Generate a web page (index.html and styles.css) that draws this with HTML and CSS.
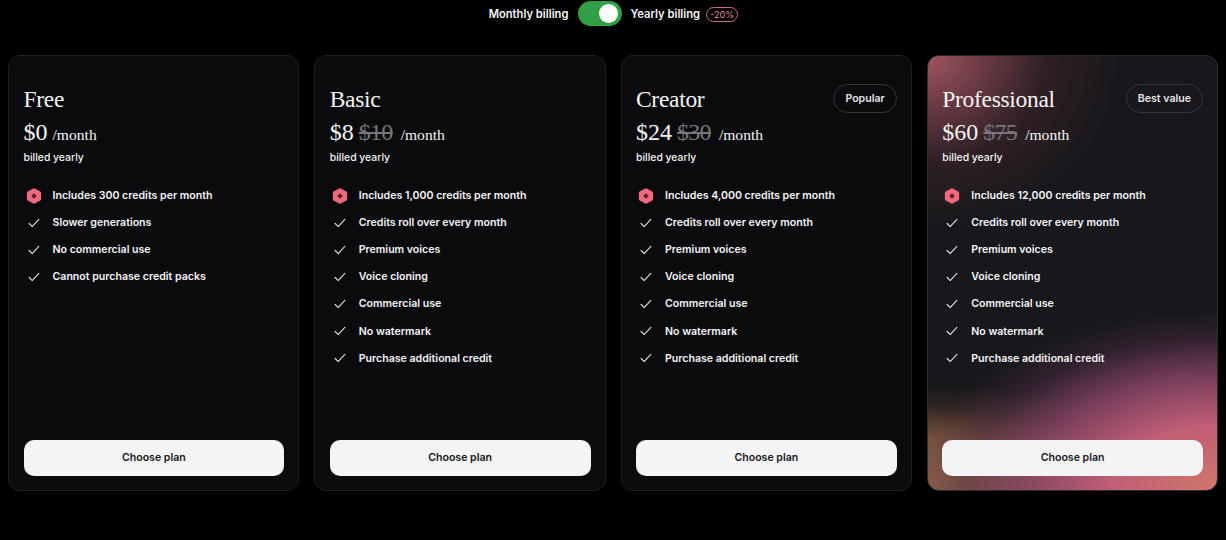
FILE: index.html
```html
<!DOCTYPE html>
<html lang="en">
<head>
<meta charset="utf-8">
<title>Pricing</title>
<link rel="stylesheet" href="styles.css">
</head>
<body>
<svg class="defs" width="0" height="0" aria-hidden="true">
  <symbol id="credit" viewBox="0 0 16 16">
    <path fill="#ee6a7c" stroke="#ee6a7c" stroke-width="1.4" stroke-linejoin="round" d="M8 .9 14.4 4.3V11.7L8 15.1 1.6 11.7V4.3Z"/>
    <path fill="#5c1f2c" d="M8 5.2 10.8 8 8 10.8 5.2 8Z"/>
  </symbol>
  <symbol id="check" viewBox="0 0 12 10">
    <path fill="none" stroke="#fff" stroke-width="1.05" d="M.8 5.2 4.2 8.6 11.2 1"/>
  </symbol>
</svg>
<header class="billing">
  <span>Monthly billing</span>
  <span class="toggle"><span class="knob"></span></span>
  <span>Yearly billing</span>
  <span class="discount">-20%</span>
</header>
<main class="plans">
  <section class="card">
    <div class="head"><h2>Free</h2></div>
    <div class="price"><b>$0</b><span class="per">/month</span></div>
    <p class="billed">billed yearly</p>
    <ul class="features">
      <li><svg class="credit"><use href="#credit"/></svg>Includes 300 credits per month</li>
      <li><svg class="check"><use href="#check"/></svg>Slower generations</li>
      <li><svg class="check"><use href="#check"/></svg>No commercial use</li>
      <li><svg class="check"><use href="#check"/></svg>Cannot purchase credit packs</li>
    </ul>
    <button class="choose">Choose plan</button>
  </section>
  <section class="card">
    <div class="head"><h2>Basic</h2></div>
    <div class="price"><b>$8</b><s>$10</s><span class="per">/month</span></div>
    <p class="billed">billed yearly</p>
    <ul class="features">
      <li><svg class="credit"><use href="#credit"/></svg>Includes 1,000 credits per month</li>
      <li><svg class="check"><use href="#check"/></svg>Credits roll over every month</li>
      <li><svg class="check"><use href="#check"/></svg>Premium voices</li>
      <li><svg class="check"><use href="#check"/></svg>Voice cloning</li>
      <li><svg class="check"><use href="#check"/></svg>Commercial use</li>
      <li><svg class="check"><use href="#check"/></svg>No watermark</li>
      <li><svg class="check"><use href="#check"/></svg>Purchase additional credit</li>
    </ul>
    <button class="choose">Choose plan</button>
  </section>
  <section class="card">
    <div class="head"><h2>Creator</h2><span class="tag">Popular</span></div>
    <div class="price"><b>$24</b><s>$30</s><span class="per">/month</span></div>
    <p class="billed">billed yearly</p>
    <ul class="features">
      <li><svg class="credit"><use href="#credit"/></svg>Includes 4,000 credits per month</li>
      <li><svg class="check"><use href="#check"/></svg>Credits roll over every month</li>
      <li><svg class="check"><use href="#check"/></svg>Premium voices</li>
      <li><svg class="check"><use href="#check"/></svg>Voice cloning</li>
      <li><svg class="check"><use href="#check"/></svg>Commercial use</li>
      <li><svg class="check"><use href="#check"/></svg>No watermark</li>
      <li><svg class="check"><use href="#check"/></svg>Purchase additional credit</li>
    </ul>
    <button class="choose">Choose plan</button>
  </section>
  <section class="card pro">
    <div class="head"><h2>Professional</h2><span class="tag">Best value</span></div>
    <div class="price"><b>$60</b><s>$75</s><span class="per">/month</span></div>
    <p class="billed">billed yearly</p>
    <ul class="features">
      <li><svg class="credit"><use href="#credit"/></svg>Includes 12,000 credits per month</li>
      <li><svg class="check"><use href="#check"/></svg>Credits roll over every month</li>
      <li><svg class="check"><use href="#check"/></svg>Premium voices</li>
      <li><svg class="check"><use href="#check"/></svg>Voice cloning</li>
      <li><svg class="check"><use href="#check"/></svg>Commercial use</li>
      <li><svg class="check"><use href="#check"/></svg>No watermark</li>
      <li><svg class="check"><use href="#check"/></svg>Purchase additional credit</li>
    </ul>
    <button class="choose">Choose plan</button>
  </section>
</main>
</body>
</html>
```
FILE: styles.css
```css
* { box-sizing: border-box; }
html, body { height: 100%; }
body {
  margin: 0;
  background: #000;
  color: #f4f4f6;
  font-family: Inter, "Liberation Sans", sans-serif;
  font-size: 10.6px;
  font-weight: 600;
  overflow: hidden;
}
.defs { position: absolute; }
.billing {
  display: flex;
  justify-content: center;
  align-items: center;
  gap: 9px;
  height: 27px;
  margin-bottom: 28px;
  padding-left: 1px;
  font-size: 11.2px;
}
.toggle {
  display: flex;
  justify-content: flex-end;
  align-items: center;
  width: 44px;
  height: 25px;
  margin: 0 -1px 0 1px;
  padding-right: 4px;
  border-radius: 13px;
  background: #2f9e44;
}
.knob { width: 19px; height: 19px; border-radius: 50%; background: #fff; }
.discount {
  margin: 1px 0 0 -3px;
  padding: 0 3px;
  height: 15px;
  line-height: 13px;
  border: 1px solid #c9707c;
  border-radius: 8px;
  color: #e58a94;
  font-size: 9.2px;
  font-weight: 400;
}
.plans {
  display: grid;
  grid-template-columns: repeat(4, 1fr);
  gap: 15px;
  padding: 0 8px;
}
.card {
  display: flex;
  flex-direction: column;
  height: 436px;
  padding: 28px 14px 14.5px 14.5px;
  border: 1px solid #1e1f23;
  border-radius: 12px;
  background: #0b0b0e;
}
.pro {
  border-color: #2c2c30;
  background:
    radial-gradient(ellipse 190px 170px at 0% 0%, #a05660 0%, rgba(125,66,76,.8) 30%, rgba(80,42,52,.4) 62%, rgba(40,28,34,0) 100%),
    radial-gradient(ellipse 300px 180px at 100% 100%, #d07668 0%, #c05e76 36%, rgba(140,70,104,.85) 62%, rgba(80,45,70,.45) 84%, rgba(40,30,45,0) 100%),
    radial-gradient(ellipse 280px 105px at 0% 100%, #90624a 0%, rgba(134,90,66,.85) 50%, rgba(100,68,52,.35) 78%, rgba(90,60,45,0) 100%),
    #18181c;
}
.head {
  display: flex;
  justify-content: space-between;
  align-items: flex-start;
  height: 36px;
}
h2 {
  margin: 0;
  padding-top: 1px;
  font-family: "Liberation Serif", serif;
  font-size: 23.5px;
  line-height: 28px;
  letter-spacing: -.3px;
  font-weight: 400;
}
.tag {
  height: 29px;
  padding: 0 11px;
  line-height: 27px;
  border: 1px solid #34343a;
  border-radius: 15px;
  color: #e4e4e8;
}
.price {
  display: flex;
  align-items: baseline;
  height: 27px;
  font-family: "Liberation Serif", serif;
  font-size: 24px;
  line-height: 25px;
  font-weight: 400;
}
.price b { font-weight: 400; margin-right: 5px; }
.price s { margin-right: 8px; letter-spacing: -.7px; color: #77777c; }
.per { font-size: 15.6px; }
.billed { margin: 4px 0 17px; height: 14px; line-height: 14px; font-size: 10.4px; font-weight: 500; }
.features {
  flex: 1;
  list-style: none;
  margin: 0;
  padding: 0;
}
.features li {
  display: flex;
  align-items: center;
  height: 27.1px;
}
.credit { width: 16px; height: 16px; margin: 0 11px 0 2px; flex: none; }
.check { width: 12px; height: 10px; margin: 0 13px 0 4px; flex: none; }
.choose {
  height: 36px;
  padding: 0 0 1px;
  border: 0;
  border-radius: 10px;
  background: #f4f4f6;
  color: #17171a;
  font: inherit;
}
```
